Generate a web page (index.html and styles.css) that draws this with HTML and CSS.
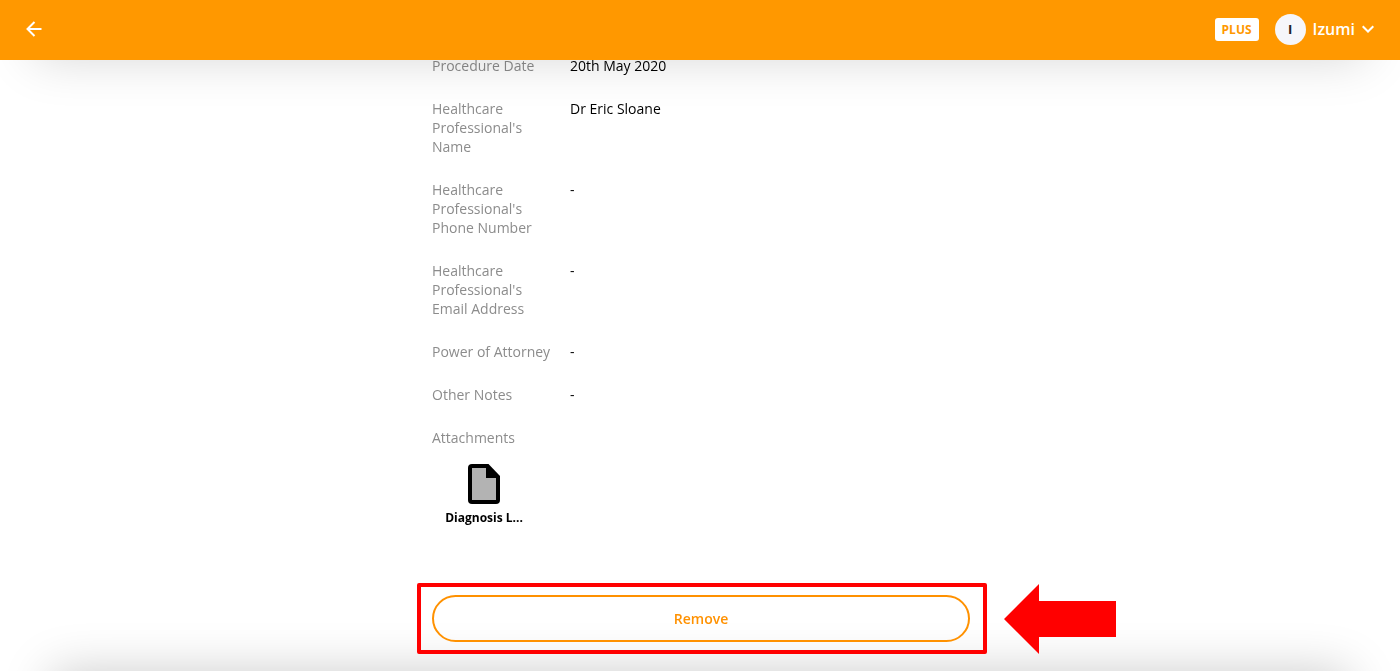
FILE: index.html
```html
<!DOCTYPE html>
<html lang="en">
<head>
<meta charset="utf-8">
<meta name="viewport" content="width=device-width, initial-scale=1">
<title>Procedure details</title>
<link rel="stylesheet" href="styles.css">
</head>
<body>
<header class="topbar">
  <button class="back" type="button" aria-label="Back">
    <svg width="16" height="16" viewBox="0 0 16 16" fill="none" stroke="currentColor" stroke-width="2" stroke-linejoin="miter"><path d="M15.5 8H1.5M8.5 1L1.5 8l7 7"/></svg>
  </button>
  <div class="account">
    <span class="plan">PLUS</span>
    <button class="user" type="button">
      <span class="avatar">I</span>
      <span class="username">Izumi</span>
      <svg width="12" height="8" viewBox="0 0 12 8" fill="none" stroke="currentColor" stroke-width="2"><path d="M.7 1.200L6 6.500l5.300-5.300"/></svg>
    </button>
  </div>
</header>
<main class="content">
  <dl class="details">
    <dt>Procedure Date</dt><dd>20th May 2020</dd>
    <dt>Healthcare Professional's Name</dt><dd>Dr Eric Sloane</dd>
    <dt>Healthcare Professional's Phone Number</dt><dd>-</dd>
    <dt>Healthcare Professional's Email Address</dt><dd>-</dd>
    <dt>Power of Attorney</dt><dd>-</dd>
    <dt>Other Notes</dt><dd>-</dd>
    <dt>Attachments</dt><dd></dd>
  </dl>
  <a class="attachment" href="#">
    <svg width="32" height="40" viewBox="0 0 32 40"><path d="M4 0h16.500L32 12v24a4 4 0 0 1-4 4H4a4 4 0 0 1-4-4V4a4 4 0 0 1 4-4z" fill="#000"/><path d="M4 4h14v10h10v22H4z" fill="#b3b3b3"/></svg>
    <span>Diagnosis L...</span>
  </a>
  <div class="actions">
    <button class="remove" type="button">Remove</button>
    <span class="highlight"></span>
    <svg class="pointer" width="112" height="70" viewBox="0 0 112 70"><path d="M0 35L35 0v17h77v36H35v17z" fill="#f00"/></svg>
  </div>
</main>
<footer class="bottombar"></footer>
</body>
</html>
```
FILE: styles.css
```css
* {
  box-sizing: border-box;
}

body {
  margin: 0;
  min-height: 100vh;
  overflow: hidden;
  background: #fff;
  color: #000;
  font: 14px/19px "Open Sans", "Noto Sans", sans-serif;
}

button {
  padding: 0;
  border: 0;
  background: none;
  color: inherit;
  font: inherit;
  cursor: pointer;
}

.topbar {
  position: fixed;
  inset: 0 0 auto;
  z-index: 2;
  display: flex;
  align-items: center;
  justify-content: space-between;
  height: 60px;
  padding: 0 26px 2px;
  background: #ff9800;
  color: #fff;
}

/* Taller than the bar so that the negative spread leaves a visible shadow */
.topbar::after {
  content: "";
  position: absolute;
  inset: auto 0 0;
  height: 200px;
  box-shadow: 0 32px 50px -34px rgba(0, 0, 0, 0.17);
  pointer-events: none;
}

.back,
.user,
.account {
  display: flex;
  align-items: center;
}

.account {
  gap: 16px;
}

.plan {
  padding: 2px 7px;
  border-radius: 3px;
  background: #fff;
  color: #ff9800;
  font-size: 12px;
  font-weight: 700;
}

.user {
  gap: 7px;
}

.avatar {
  width: 31px;
  height: 31px;
  border-radius: 50%;
  background: #f6f6fa;
  color: #222;
  font-size: 13px;
  font-weight: 700;
  line-height: 31px;
  text-align: center;
}

.username {
  font-size: 16px;
  font-weight: 600;
}

.content {
  width: 100%;
  max-width: 540px;
  margin: 0 auto;
  padding: 56px 0 0 2px;
}

.details {
  display: grid;
  grid-template-columns: 122px 1fr;
  gap: 24px 16px;
  margin: 0;
}

.details dt {
  color: #8c8c8c;
}

.details dd {
  margin: 0;
}

.attachment {
  display: flex;
  flex-direction: column;
  align-items: center;
  gap: 4px;
  width: 104px;
  margin-top: 17px;
  color: #000;
  font-size: 12px;
  font-weight: 700;
  text-decoration: none;
}

.actions {
  position: relative;
  margin-top: 68px;
}

.remove {
  display: block;
  width: 100%;
  height: 47px;
  border: 2px solid #ff9100;
  border-radius: 24px;
  color: #ff9100;
  font-weight: 600;
}

.highlight {
  position: absolute;
  inset: -12px -17px -12px -15px;
  border: 4px solid #f00;
  border-radius: 2px;
  pointer-events: none;
}

.pointer {
  position: absolute;
  top: -11px;
  left: calc(100% + 34px);
}

.bottombar {
  position: fixed;
  inset: 100% 0 auto;
  z-index: -1;
  height: 200px;
  box-shadow: 0 -50px 50px -52px rgba(0, 0, 0, 0.22);
}
```
